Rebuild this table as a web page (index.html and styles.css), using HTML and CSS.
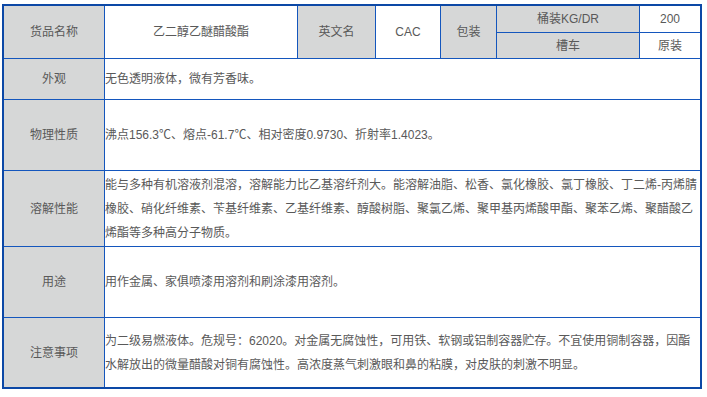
FILE: index.html
```html
<!DOCTYPE html>
<html lang="zh-CN">
<head>
<meta charset="utf-8">
<title>乙二醇乙醚醋酸酯</title>
<link rel="stylesheet" href="styles.css">
</head>
<body>
<div class="sheet">
  <div class="grid">
    <div class="cell label span2">货品名称</div>
    <div class="cell value center span2">乙二醇乙醚醋酸酯</div>
    <div class="cell label span2">英文名</div>
    <div class="cell value center span2">CAC</div>
    <div class="cell label span2">包装</div>
    <div class="cell label">桶装KG/DR</div>
    <div class="cell value center">200</div>
    <div class="cell label">槽车</div>
    <div class="cell value center">原装</div>

    <div class="cell label">外观</div>
    <div class="cell value wide">无色透明液体，微有芳香味。</div>

    <div class="cell label">物理性质</div>
    <div class="cell value wide">沸点156.3℃、熔点-61.7℃、相对密度0.9730、折射率1.4023。</div>

    <div class="cell label">溶解性能</div>
    <div class="cell value wide">能与多种有机溶液剂混溶，溶解能力比乙基溶纤剂大。能溶解油脂、松香、氯化橡胶、氯丁橡胶、丁二烯-丙烯腈<br>橡胶、硝化纤维素、苄基纤维素、乙基纤维素、醇酸树脂、聚氯乙烯、聚甲基丙烯酸甲酯、聚苯乙烯、聚醋酸乙<br>烯酯等多种高分子物质。</div>

    <div class="cell label">用途</div>
    <div class="cell value wide">用作金属、家俱喷漆用溶剂和刷涂漆用溶剂。</div>

    <div class="cell label">注意事项</div>
    <div class="cell value wide">为二级易燃液体。危规号：62020。对金属无腐蚀性，可用铁、软钢或铝制容器贮存。不宜使用铜制容器，因酯<br>水解放出的微量醋酸对铜有腐蚀性。高浓度蒸气刺激眼和鼻的粘膜，对皮肤的刺激不明显。</div>
  </div>
</div>
</body>
</html>
```

FILE: styles.css
```css
html, body {
  margin: 0;
  padding: 0;
  background: #ffffff;
}

body {
  padding: 4px 0 0 2px;
  font-family: "Liberation Sans", "Noto Sans CJK SC", sans-serif;
  font-size: 12px;
  color: #595959;
}

.sheet {
  width: 696px;
  border: 2px solid #0c48a6;
}

.grid {
  display: grid;
  grid-template-columns: 100px 192px 77px 64px 55px 142px 60px;
  grid-template-rows: 26px 25px 40px 70px 75px 70px 69px;
  gap: 1px;
  background: #1456bd;
}

.cell {
  display: flex;
  align-items: center;
  line-height: 24px;
  overflow: hidden;
  white-space: nowrap;
}

.label {
  background: #d6d7d7;
  justify-content: center;
}

.value {
  background: #ffffff;
}

.center {
  justify-content: center;
}

.span2 {
  grid-row: span 2;
}

.wide {
  grid-column: 2 / -1;
  padding-left: 0;
}
```
